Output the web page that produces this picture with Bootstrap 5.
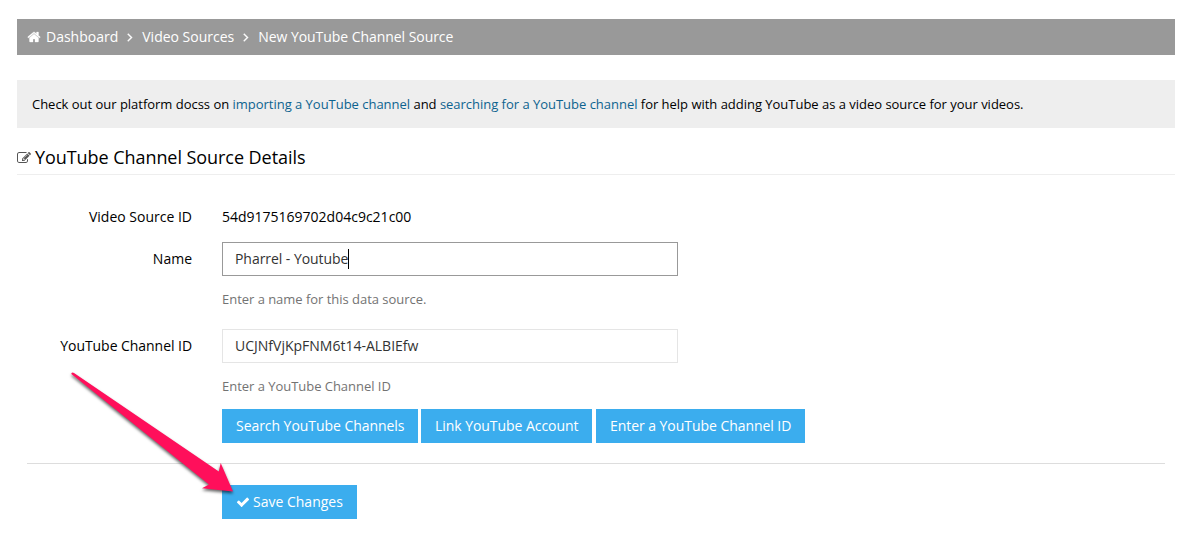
<!DOCTYPE html>
<html lang="en">
<head>
<meta charset="utf-8">
<meta name="viewport" content="width=device-width, initial-scale=1">
<title>New YouTube Channel Source</title>
<link href="https://cdn.jsdelivr.net/npm/bootstrap@5.3.0/dist/css/bootstrap.min.css" rel="stylesheet">
<style>
  body { font: 14px/20px "Open Sans", "Noto Sans", sans-serif; color: #000; background: #fff; }
  svg { flex: none; display: block; }
  .page { padding: 19px 17px 0; }
  .crumbs { height: 36px; background: #999; color: #fff; padding: 0 10px; }
  .crumbs a { color: #fff; text-decoration: none; }
  .crumbs .home-icon { margin-right: 5px; stroke: #fff; stroke-width: 40; }
  .crumbs .sep { width: 24px; display: flex; justify-content: center; }
  .crumbs .sep svg { stroke: #fff; stroke-width: 50; }
  .crumbs .current { letter-spacing: -.055px; }
  .notice { margin-top: 25px; height: 48px; padding: 0 15px; background: #eee; font-size: 13px; letter-spacing: -.02px; }
  .notice a { color: #0d638f; text-decoration: none; }
  .section-title { margin: 17px 0 0; height: 30px; font-size: 18px; line-height: 24px; font-weight: 400; border-bottom: 1px solid #eee; letter-spacing: -.06px; }
  .section-title svg { margin: 6px 4px 0 0; }
  .source-form { padding: 25px 10px 0; }
  .field-label { width: 165px; margin-right: 30px; text-align: right; flex: none; line-height: 34px; }
  .tight { letter-spacing: -.05px; }
  .field-body { width: 456px; }
  .row-name { margin-top: 8px; }
  .row-channel { margin-top: 21px; }
  .source-value { line-height: 34px; }
  .field-body .form-control { height: 34px; padding: 0 12px 2px; border: 1px solid #e5e5e5; border-radius: 0; font-size: 14px; color: #333; display: flex; align-items: center; }
  .field-body .form-control.active { border-color: #999; letter-spacing: -.05px; }
  .caret { width: 1px; height: 20px; background: #000; position: relative; top: 1px; }
  .help { font-size: 13px; line-height: 18px; color: #737373; margin-top: 14px; letter-spacing: -.03px; }
  .actions { margin-top: 14px; }
  .btn-blue { --bs-btn-color: #fff; --bs-btn-bg: #3badee; --bs-btn-hover-color: #fff; --bs-btn-hover-bg: #2a9cdd; --bs-btn-border-radius: 0; --bs-btn-font-size: 14px; border: 0; height: 34px; padding: 0 0 0 14px; line-height: 34px; white-space: nowrap; text-align: left; letter-spacing: -.05px; flex-shrink: 0; }
  .btn-search { width: 196px; margin-right: 3px; }
  .btn-link-account { width: 171px; margin-right: 4px; }
  .btn-enter { width: 209px; }
  .btn-save { width: 135px; letter-spacing: 0; }
  .btn-save svg { margin-right: 3px; }
  .divider { height: 1px; background: #ddd; margin: 20px 0 21px; }
  .pointer { position: absolute; left: 60px; top: 360px; pointer-events: none; filter: drop-shadow(0 2px 1.5px rgba(0,0,0,.6)); }
</style>
</head>
<body>
<main class="page">
  <nav class="crumbs d-flex align-items-center" aria-label="breadcrumb">
    <svg class="home-icon" width="14" height="14" viewBox="0 0 1792 1792" fill="#fff"><path d="M1472 992v480q0 26-19 45t-45 19h-384v-384h-256v384h-384q-26 0-45-19t-19-45v-480q0-1 .5-3t.5-3l575-474 575 474q1 2 1 6zm223-69l-62 74q-8 9-21 11h-3q-13 0-21-7l-692-577-692 577q-12 8-24 7-13-2-21-11l-62-74q-8-10-7-23.5t11-21.5l719-599q32-26 76-26t76 26l244 204v-195q0-14 9-23t23-9h192q14 0 23 9t9 23v408l219 182q10 8 11 21.5t-7 23.5z"/></svg>
    <a href="#">Dashboard</a>
    <span class="sep"><svg width="14" height="14" viewBox="0 0 1792 1792" fill="#fff"><path d="M1171 960q0 13-10 23l-466 466q-10 10-23 10t-23-10l-50-50q-10-10-10-23t10-23l393-393-393-393q-10-10-10-23t10-23l50-50q10-10 23-10t23 10l466 466q10 10 10 23z"/></svg></span>
    <a href="#">Video Sources</a>
    <span class="sep"><svg width="14" height="14" viewBox="0 0 1792 1792" fill="#fff"><path d="M1171 960q0 13-10 23l-466 466q-10 10-23 10t-23-10l-50-50q-10-10-10-23t10-23l393-393-393-393q-10-10-10-23t10-23l50-50q10-10 23-10t23 10l466 466q10 10 10 23z"/></svg></span>
    <span class="current">New YouTube Channel Source</span>
  </nav>

  <div class="notice d-flex align-items-center">
    <p class="mb-0">Check out our platform docss on <a href="#">importing a YouTube channel</a> and <a href="#">searching for a YouTube channel</a> for help with adding YouTube as a video source for your videos.</p>
  </div>

  <h1 class="section-title d-flex align-items-start">
    <svg width="14" height="14" viewBox="0 0 1792 1792" fill="#555"><path d="M888 1184l116-116-152-152-116 116v56h96v96h56zm440-720q-16-16-33 1l-350 350q-17 17-1 33t33-1l350-350q17-17 1-33zm80 594v190q0 119-84.5 203.5t-203.5 84.5h-832q-119 0-203.5-84.5t-84.5-203.5v-832q0-119 84.5-203.5t203.5-84.5h832q63 0 117 25 15 7 18 23 3 17-9 29l-49 49q-14 14-32 8-23-6-45-6h-832q-66 0-113 47t-47 113v832q0 66 47 113t113 47h832q66 0 113-47t47-113v-126q0-13 9-22l64-64q15-15 35-7t20 29zm-96-738l288 288-672 672h-288v-288zm444 132l-92 92-288-288 92-92q28-28 68-28t68 28l152 152q28 28 28 68t-28 68z"/></svg>
    <span>YouTube Channel Source Details</span>
  </h1>

  <form class="source-form">
    <div class="d-flex">
      <div class="field-label">Video Source ID</div>
      <div class="field-body source-value">54d9175169702d04c9c21c00</div>
    </div>
    <div class="row-name d-flex">
      <div class="field-label">Name</div>
      <div class="field-body">
        <div class="form-control active" role="textbox"><span>Pharrel - Youtube</span><span class="caret"></span></div>
        <div class="help">Enter a name for this data source.</div>
      </div>
    </div>
    <div class="row-channel d-flex">
      <div class="field-label tight">YouTube Channel ID</div>
      <div class="field-body">
        <div class="form-control" role="textbox"><span>UCJNfVjKpFNM6t14-ALBIEfw</span></div>
        <div class="help">Enter a YouTube Channel ID</div>
        <div class="actions d-flex">
          <button type="button" class="btn btn-blue btn-search">Search YouTube Channels</button>
          <button type="button" class="btn btn-blue btn-link-account">Link YouTube Account</button>
          <button type="button" class="btn btn-blue btn-enter">Enter a YouTube Channel ID</button>
        </div>
      </div>
    </div>
    <div class="divider"></div>
    <div class="d-flex">
      <div class="field-label"></div>
      <button type="button" class="btn btn-blue btn-save d-flex align-items-center"><svg width="14" height="14" viewBox="0 0 1792 1792" fill="#fff"><path d="M1671 566q0 40-28 68l-724 724-136 136q-28 28-68 28t-68-28l-136-136-362-362q-28-28-28-68t28-68l136-136q28-28 68-28t68 28l294 295 656-657q28-28 68-28t68 28l136 136q28 28 28 68z"/></svg>Save Changes</button>
    </div>
  </form>
</main>
<svg class="pointer" width="190" height="150" viewBox="60 360 190 150"><path fill="#ff0f5b" d="M71.500 373Q72.500 372 74 373L218.800 471.500L220.700 463L233 491.500L202 488.300L209 484.500L72 374.500Q71 374 71.500 373Z"/></svg>
<script src="https://cdn.jsdelivr.net/npm/bootstrap@5.3.0/dist/js/bootstrap.bundle.min.js"></script>
</body>
</html>
